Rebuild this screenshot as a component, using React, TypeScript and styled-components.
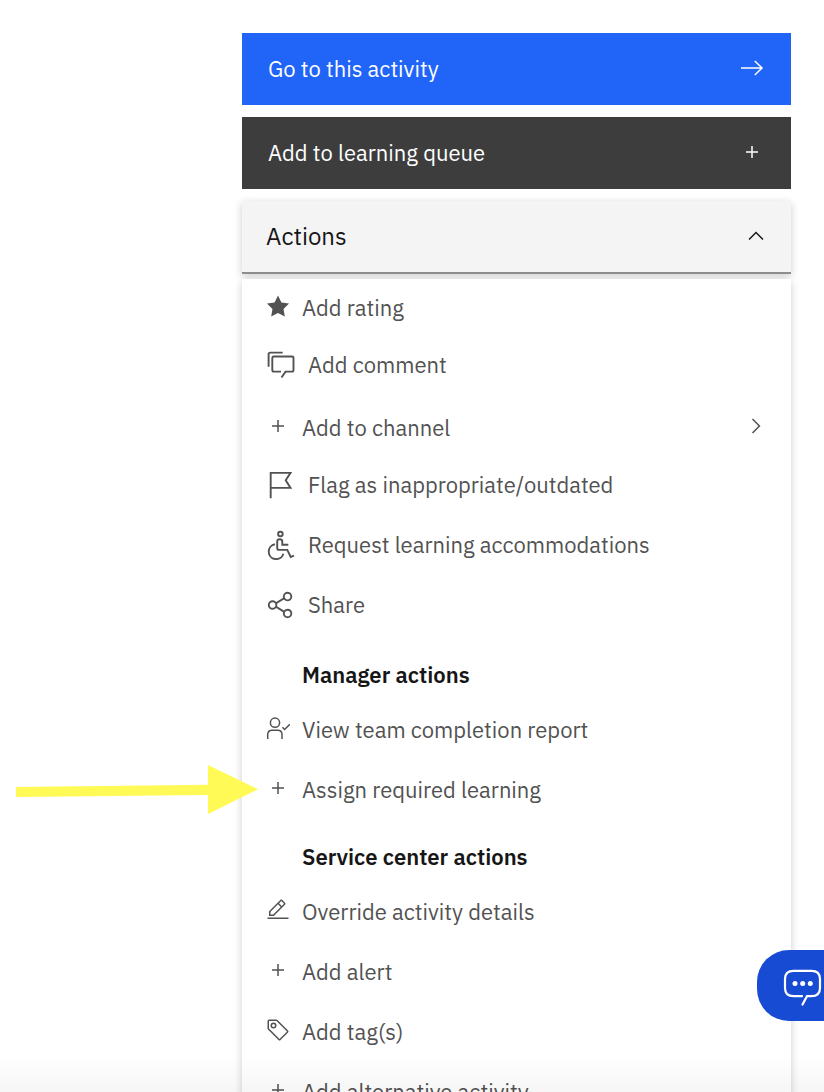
import React from "react";
import styled, { createGlobalStyle } from "styled-components";

const GlobalStyle = createGlobalStyle`
  *, *::before, *::after { box-sizing: border-box; }
  body {
    margin: 0;
    background: #ffffff;
    font-family: "IBM Plex Sans", Roboto, "Liberation Sans", sans-serif;
  }
  button { font-family: inherit; border: 0; margin: 0; cursor: pointer; text-align: left; }
  svg { display: block; flex: none; }
`;

const Page = styled.div`
  position: relative;
  height: 100vh;
  overflow: hidden;
`;

const Sidebar = styled.aside`
  display: flex;
  flex-direction: column;
  gap: 12px;
  margin: 33px 33px 0 242px;
`;

const ActionButton = styled.button<{ $tone: string }>`
  display: flex;
  align-items: center;
  justify-content: space-between;
  height: 72px;
  padding: 0 24px 0 26px;
  background: ${(p) => p.$tone};
  color: #ffffff;
  font-size: 22px;
  line-height: 30px;
`;

const IconSlot = styled.span`
  display: flex;
  justify-content: center;
  width: 30px;
  padding-bottom: 2px;
`;

const Accordion = styled.section`
  display: flex;
  flex-direction: column;
  gap: 5px;
`;

const AccordionHeader = styled.button`
  display: flex;
  align-items: center;
  justify-content: space-between;
  height: 73px;
  padding: 0 23px 2px 24px;
  background: #f4f4f4;
  border-bottom: 2px solid #8d8d8d;
  box-shadow: 0 2px 8px rgba(0, 0, 0, 0.2);
  color: #161616;
  font-size: 24px;
  line-height: 30px;
`;

const Menu = styled.div`
  position: relative;
  display: flex;
  flex-direction: column;
  gap: 8px;
  background: #ffffff;
  box-shadow: 0 3px 8px rgba(0, 0, 0, 0.2);
`;

const MenuItem = styled.button<{ $large?: boolean }>`
  position: relative;
  display: flex;
  align-items: center;
  gap: 12px;
  height: 52px;
  padding: ${(p) => (p.$large ? "0 23px 0 24px" : "2px 23px 0 24px")};
  background: transparent;
  color: #525252;
  font-size: 22px;
  line-height: 30px;
`;

const ItemLabel = styled.span<{ $large?: boolean }>`
  flex: 1;
  white-space: nowrap;
  padding-top: ${(p) => (p.$large ? "0" : "4px")};
`;

const GroupTitle = styled.h3`
  height: 54px;
  margin: 0;
  padding: 21px 24px 0 60px;
  color: #161616;
  font-size: 22px;
  font-weight: 600;
  line-height: 30px;
`;

const Pointer = styled.svg`
  position: absolute;
  left: -226px;
  top: 3px;
`;

const BottomFade = styled.div`
  position: absolute;
  left: 0;
  right: 0;
  bottom: 0;
  height: 36px;
  background: linear-gradient(rgba(0, 0, 0, 0), rgba(0, 0, 0, 0.035));
  pointer-events: none;
`;

const ChatButton = styled.button`
  position: fixed;
  right: 0;
  bottom: 71px;
  display: flex;
  align-items: center;
  width: 67px;
  height: 71px;
  padding: 3px 0 0 26px;
  border-radius: 32px 0 0 32px;
  background: #184bd3;
`;

type IconName =
  | "add" | "arrow" | "up" | "right" | "star" | "comment" | "flag"
  | "access" | "share" | "team" | "edit" | "tag";

const filled: Partial<Record<IconName, string>> = {
  add: "M17 15V8H15V15H8V17H15V24H17V17H24V15Z",
  up: "M16 10L26 20 24.6 21.4 16 12.8 7.4 21.4 6 20Z",
  right: "M22 16L12 26 10.6 24.6 19.2 16 10.6 7.4 12 6Z",
  star: "M16,2l-4.55,9.22L1.28,12.69l7.36,7.18L6.9,30,16,25.22,25.1,30,23.36,19.87l7.36-7.17L20.55,11.22Z",
  flag: "M6,30H4V2H28l-5.8,9L28,20H6ZM6,18H24.33L19.8,11l4.53-7H6Z",
  share:
    "M23,20a5,5,0,0,0-3.89,1.89L11.8,17.32a4.46,4.46,0,0,0,0-2.64l7.31-4.57A5,5,0,1,0,18,7a4.79,4.79,0,0,0,.2,1.32l-7.31,4.57a5,5,0,1,0,0,6.22l7.31,4.57A4.79,4.79,0,0,0,18,25a5,5,0,1,0,5-5ZM23,4a3,3,0,1,1-3,3A3,3,0,0,1,23,4ZM7,19a3,3,0,1,1,3-3A3,3,0,0,1,7,19Zm16,9a3,3,0,1,1,3-3A3,3,0,0,1,23,28Z",
  edit:
    "M2 26H30V28H2zM25.4 9c.8-.8.8-2 0-2.8l-3.6-3.6c-.8-.8-2-.8-2.8 0l-15 15V24h6.4L25.4 9zM20.4 4L24 7.6l-3 3L17.4 7 20.4 4zM6 22v-3.6l10-10 3.6 3.6-10 10H6z",
  tag:
    "M10,14a4,4,0,1,1,4-4A4,4,0,0,1,10,14Zm0-6a2,2,0,1,0,2,2A2,2,0,0,0,10,8ZM16.644,29.415,2.586,15.354A2,2,0,0,1,2,13.941V4A2,2,0,0,1,4,2h9.941a2,2,0,0,1,1.414.586L29.415,16.644a2,2,0,0,1,0,2.828l-9.943,9.943a2,2,0,0,1-2.829,0ZM4,4v9.942L18.058,28,28,18.058,13.942,4Z",
};

function Icon({ name, size = 24 }: { name: IconName; size?: number }) {
  if (filled[name]) {
    return (
      <svg width={size} height={size} viewBox="0 0 32 32" fill="currentColor" aria-hidden="true">
        <path d={filled[name]} />
      </svg>
    );
  }
  return (
    <svg
      width={size}
      height={size}
      viewBox={`0 0 ${size} ${size}`}
      fill="none"
      stroke="currentColor"
      strokeWidth={size === 30 && name !== "arrow" ? 1.9 : 1.5}
      aria-hidden="true"
    >
      {name === "arrow" && <path d="M4 15H25M17.8 8L25 15L17.8 22" />}
      {name === "comment" && (
        <path d="M2.6 16.7V4.2Q2.6 2.6 4.2 2.6H16.7M15 21.6H7.8Q6.3 21.6 6.3 20V8Q6.3 6.5 7.8 6.5H25.9Q27.5 6.5 27.5 8V20Q27.5 21.6 25.9 21.6H19.5L15.5 27.5" />
      )}
      {name === "access" && (
        <>
          <circle cx="14.4" cy="4" r="2.3" />
          <path d="M22.3 14.8H16.3V11.6Q16.3 9.2 13.7 9.2Q11.2 9.2 11.2 11.6V18Q11.2 19.9 13.2 19.9H21.3L24.7 27L28 25.7" />
          <path d="M9 14.2A7.5 7.5 0 1 0 17.4 23.8" />
        </>
      )}
      {name === "team" && (
        <>
          <circle cx="9" cy="6.7" r="4.6" />
          <path d="M1.7 23V18.8Q1.7 14.3 6.2 14.3H11.8Q16 14.3 16 18.8V23M16.4 11.2L18.6 13.5L23.8 8.3" />
        </>
      )}
    </svg>
  );
}

function Item({ icon, label, large, more, children }: {
  icon: IconName;
  label: string;
  large?: boolean;
  more?: boolean;
  children?: React.ReactNode;
}) {
  return (
    <MenuItem type="button" $large={large}>
      <Icon name={icon} size={large ? 30 : 24} />
      <ItemLabel $large={large}>{label}</ItemLabel>
      {more && <Icon name="right" />}
      {children}
    </MenuItem>
  );
}

export default function App() {
  return (
    <Page>
      <GlobalStyle />
      <Sidebar>
        <ActionButton type="button" $tone="#2065f8">
          Go to this activity
          <IconSlot><Icon name="arrow" size={30} /></IconSlot>
        </ActionButton>
        <ActionButton type="button" $tone="#3d3d3d">
          Add to learning queue
          <IconSlot><Icon name="add" /></IconSlot>
        </ActionButton>
        <Accordion>
          <AccordionHeader type="button" aria-expanded="true">
            Actions
            <Icon name="up" />
          </AccordionHeader>
          <Menu>
            <Item icon="star" label="Add rating" />
            <Item icon="comment" label="Add comment" large />
            <Item icon="add" label="Add to channel" more />
            <Item icon="flag" label="Flag as inappropriate/outdated" large />
            <Item icon="access" label="Request learning accommodations" large />
            <Item icon="share" label="Share" large />
            <GroupTitle>Manager actions</GroupTitle>
            <Item icon="team" label="View team completion report" />
            <Item icon="add" label="Assign required learning">
              <Pointer width="242" height="52" viewBox="0 0 242 52" fill="#fffa55" aria-hidden="true">
                <path d="M0 23L192 20.7V1L242 25.2L192 50V31L0 33Z" />
              </Pointer>
            </Item>
            <GroupTitle>Service center actions</GroupTitle>
            <Item icon="edit" label="Override activity details" />
            <Item icon="add" label="Add alert" />
            <Item icon="tag" label="Add tag(s)" />
            <Item icon="add" label="Add alternative activity" />
          </Menu>
        </Accordion>
      </Sidebar>
      <BottomFade />
      <ChatButton type="button" aria-label="Chat">
        <svg width="40" height="44" viewBox="0 0 40 44" fill="none" stroke="#ffffff" strokeWidth="2.2" strokeLinecap="round" aria-hidden="true">
          <path d="M19 31.2H10.5Q2 31.2 2 23V14Q2 5.8 10.5 5.8H28.5Q37 5.8 37 14V23Q37 31.2 28.5 31.2H24L19.5 39.5" />
          <g fill="#ffffff" stroke="none">
            <circle cx="12" cy="18.5" r="2.5" />
            <circle cx="19.7" cy="18.5" r="2.5" />
            <circle cx="27.3" cy="18.5" r="2.5" />
          </g>
        </svg>
      </ChatButton>
    </Page>
  );
}
